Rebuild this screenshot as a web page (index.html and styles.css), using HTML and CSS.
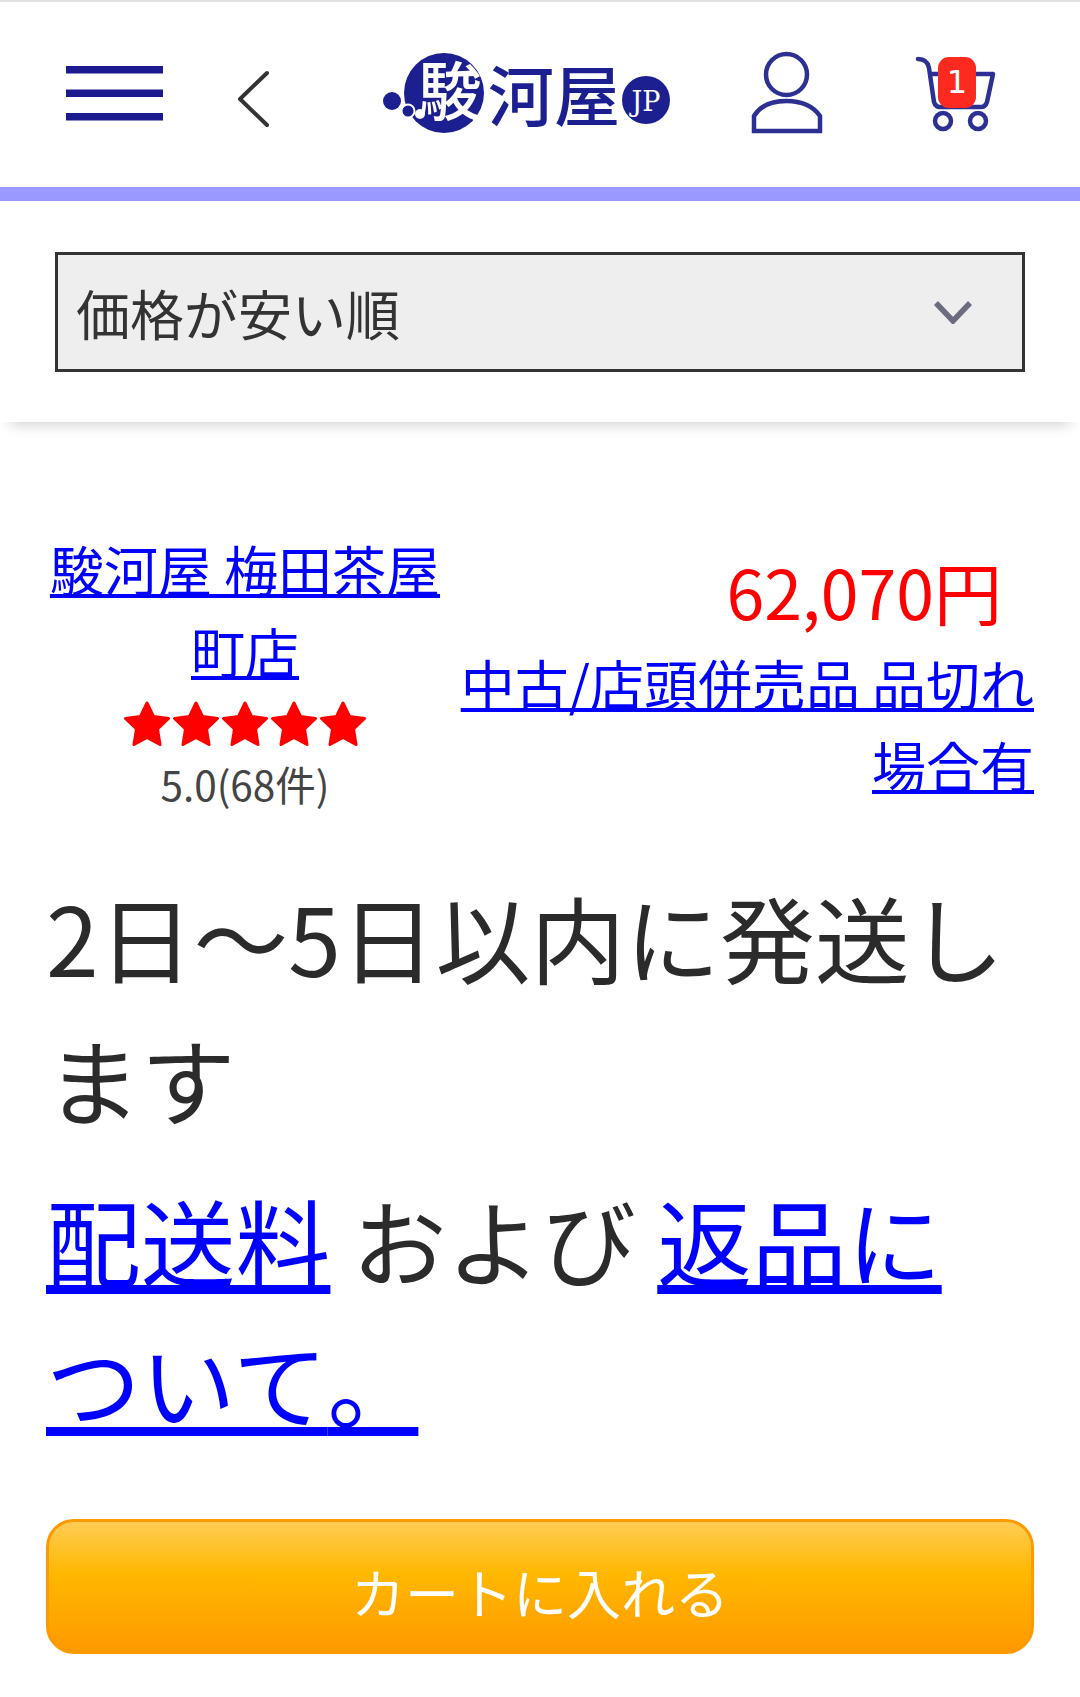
FILE: index.html
```html
<!DOCTYPE html>
<html lang="ja">
<head>
  <meta charset="UTF-8" />
  <meta name="viewport" content="width=device-width, initial-scale=1.0" />
  <title>駿河屋</title>
  <link rel="stylesheet" href="styles.css">
</head>
<body>
  <header class="site-header">
    <svg class="menu-icon" viewBox="66 50 97 90">
      <rect x="66" y="66" width="97" height="7.5" />
      <rect x="66" y="89.5" width="97" height="7.5" />
      <rect x="66" y="113" width="97" height="7.5" />
    </svg>
    <svg class="back-icon" viewBox="236 50 34 90">
      <path d="M267 73 L240 99 L267 125" />
    </svg>
    <svg class="logo" viewBox="382 50 292 90">
      <circle cx="444" cy="93" r="40" />
      <circle cx="392" cy="101" r="9" />
      <circle class="logo-dot" cx="408" cy="111" r="6.5" />
      <circle class="logo-hole" cx="420" cy="114" r="5" />
      <circle cx="646" cy="100" r="24" />
      <text class="logo-kanji" x="450" y="115" text-anchor="middle">駿</text>
      <text class="logo-name" x="488" y="121">河屋</text>
      <text class="logo-jp" x="646" y="111" text-anchor="middle">JP</text>
    </svg>
    <svg class="user-icon" viewBox="750 50 76 90">
      <circle cx="786.5" cy="74.5" r="20.5" />
      <path d="M754 131 V116 C760 106 772 101 786.5 101 C801 101 813 106 820 116 V131 Z" />
    </svg>
    <div class="cart">
      <svg class="cart-icon" viewBox="914 50 86 90">
        <path d="M918 59 C924 59 928 62 929 68 L934 102 C935 105 937 107 940 107 H981 C984 107 986 105 987 102 L993 74 H930" />
        <circle cx="943" cy="121" r="8" />
        <circle cx="978" cy="121" r="8" />
      </svg>
      <span class="cart-badge">1</span>
    </div>
  </header>

  <section class="sort-panel">
    <div class="sort-select">
      <span>価格が安い順</span>
      <svg class="sort-arrow" viewBox="0 0 38 24">
        <path d="M2 3 L19 21 L36 3" />
      </svg>
    </div>
  </section>

  <main class="offer">
    <div class="offer-top">
      <div class="shop">
        <a href="#">駿河屋 梅田茶屋町店</a>
        <svg class="stars" viewBox="0 0 244 46">
          <defs>
            <path id="star" d="M24 2 L30.5 15.5 L45.5 17.5 L34.5 28 L37 43.5 L24 36.5 L11 43.5 L13.5 28 L2.5 17.5 L17.5 15.5 Z" />
          </defs>
          <use href="#star" />
          <use href="#star" x="49" />
          <use href="#star" x="98" />
          <use href="#star" x="147" />
          <use href="#star" x="196" />
        </svg>
        <div class="rating">5.0(68件)</div>
      </div>
      <div class="price-box">
        <div class="price">62,070円</div>
        <a href="#">中古/店頭併売品 品切れ場合有</a>
      </div>
    </div>

    <p class="big-text">2日〜5日以内に発送します</p>
    <p class="big-text"><a href="#">配送料</a> および <a href="#">返品について<span class="kuten">。</span></a></p>

    <button class="cart-button">カートに入れる</button>
  </main>
</body>
</html>
```

FILE: styles.css
```css
body {
  font-family: "Noto Sans CJK JP", "Noto Sans", sans-serif;
  margin: 0;
  padding: 0;
  background-color: white;
  color: #333;
  height: 1697px;
  overflow: hidden;
}

a {
  color: #0000ff;
  text-decoration-thickness: 4px;
  text-decoration-skip-ink: none;
}

.site-header {
  display: flex;
  align-items: flex-start;
  height: 187px;
  padding: 48px 0 0 66px;
  box-sizing: border-box;
  border-top: 2px solid #e2e2e2;
}

.site-header svg {
  height: 90px;
  display: block;
}

.menu-icon {
  width: 97px;
  fill: #1b1b8f;
}

.back-icon {
  width: 34px;
  margin-left: 73px;
  fill: none;
  stroke: #333;
  stroke-width: 4;
  stroke-linecap: round;
  stroke-linejoin: round;
}

.logo {
  width: 292px;
  margin-left: 112px;
  fill: #1b1f8f;
  overflow: visible;
}

.logo-dot {
  stroke: white;
  stroke-width: 2;
}

.logo-hole {
  fill: white;
}

.logo-kanji {
  font-size: 64px;
  font-weight: 500;
  fill: white;
}

.logo-name {
  font-size: 66px;
  font-weight: 500;
}

.logo-jp {
  font-family: "DejaVu Serif", serif;
  font-size: 27px;
  fill: white;
}

.user-icon {
  width: 76px;
  margin-left: 76px;
  fill: none;
  stroke: #2c3092;
  stroke-width: 4.5;
}

.cart {
  position: relative;
  width: 86px;
  height: 90px;
  margin-left: 88px;
}

.cart-icon {
  width: 86px;
  fill: none;
  stroke: #2c3092;
  stroke-width: 4.5;
  stroke-linecap: round;
  stroke-linejoin: round;
}

.cart-badge {
  position: absolute;
  top: 7px;
  left: 24px;
  width: 38px;
  height: 51px;
  border-radius: 11px;
  background-color: #ff2a1f;
  color: white;
  font-family: "DejaVu Sans", sans-serif;
  font-size: 32px;
  line-height: 51px;
  text-align: center;
}

.sort-panel {
  border-top: 14px solid #9999ff;
  padding: 51px 55px 50px;
  background-color: white;
  box-shadow: 0 12px 14px -10px rgba(0, 0, 0, 0.2);
}

.sort-select {
  display: flex;
  align-items: center;
  justify-content: space-between;
  height: 120px;
  box-sizing: border-box;
  padding: 0 50px 0 18px;
  border: 3px solid #333;
  background-color: #eeeeee;
  font-size: 54px;
  color: #333;
}

.sort-arrow {
  width: 38px;
  height: 24px;
  fill: none;
  stroke: #6c6c80;
  stroke-width: 5.5;
}

.offer {
  padding: 106px 46px 0;
}

.offer-top {
  display: flex;
  font-size: 54px;
  line-height: 82px;
}

.shop {
  width: 398px;
  text-align: center;
}

.stars {
  display: block;
  width: 244px;
  height: 46px;
  margin: 9px auto 0;
  fill: #ff0000;
  stroke: #ff0000;
  stroke-width: 3;
  stroke-linejoin: round;
}

.rating {
  margin-top: 7px;
  font-size: 40.5px;
  line-height: 60px;
  color: #444;
}

.price-box {
  flex: 1;
  padding-top: 12px;
  text-align: right;
}

.price {
  padding-right: 32px;
  font-size: 68px;
  line-height: 102px;
  color: #ff0000;
}

.big-text {
  margin: 51px 0 0;
  font-size: 94.8px;
  line-height: 142px;
  color: #2b2b2b;
}

.big-text + .big-text {
  margin-top: 19px;
}

.big-text a {
  text-decoration-thickness: 9px;
}

.kuten {
  letter-spacing: -4px;
}

.cart-button {
  display: block;
  width: 100%;
  height: 135px;
  margin-top: 67px;
  padding-top: 10px;
  border: 3px solid #ff9900;
  border-radius: 28px;
  background: linear-gradient(#ffcc55 0%, #ffb800 40%, #ff9900 100%);
  color: white;
  font-family: inherit;
  font-size: 54px;
}
```
